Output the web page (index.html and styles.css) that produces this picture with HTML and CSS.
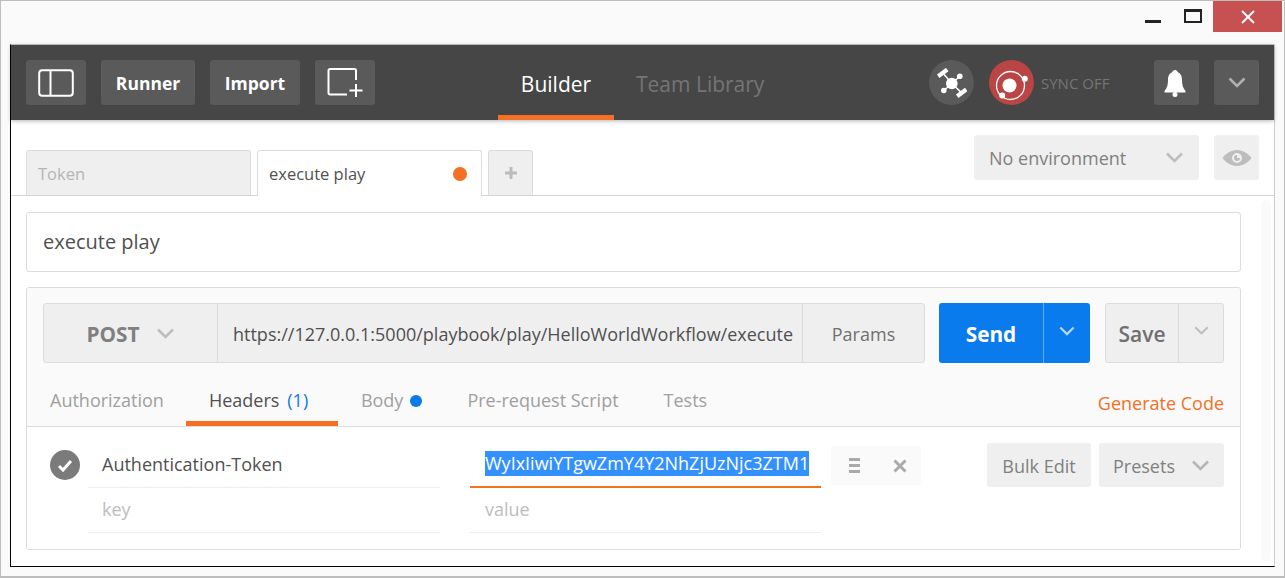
FILE: index.html
```html
<!DOCTYPE html>
<html lang="en">
<head>
  <meta charset="UTF-8">
  <title>Postman</title>
  <link rel="stylesheet" href="styles.css">
</head>
<body>
  <div class="window">
    <div class="titlebar">
      <span class="win-min"></span>
      <span class="win-max"></span>
      <span class="win-close">
        <svg width="16" height="14" viewBox="0 0 16 14"><path d="M2 1l12 12M14 1L2 13" stroke="#fff" stroke-width="2" fill="none"/></svg>
      </span>
    </div>
    <div class="app">
      <header class="topbar">
        <button class="top-btn icon-btn">
          <svg width="36" height="28" viewBox="0 0 36 28"><rect x="1.2" y="1.2" width="33.6" height="25.6" rx="3" fill="none" stroke="#fff" stroke-width="2"/><path d="M12.500 1v26" stroke="#fff" stroke-width="2"/></svg>
        </button>
        <button class="top-btn runner-btn">Runner</button>
        <button class="top-btn import-btn">Import</button>
        <button class="top-btn icon-btn">
          <svg width="36" height="30" viewBox="0 0 36 30"><path d="M29 12V2.500a1.500 1.500 0 0 0-1.500-1.500H3a1.500 1.500 0 0 0-1.500 1.500V25A1.500 1.500 0 0 0 3 26.500h17" fill="none" stroke="#fff" stroke-width="2"/><path d="M29 16v13M22.500 22.500h13" stroke="#fff" stroke-width="2" fill="none"/></svg>
        </button>
        <nav class="top-tabs">
          <a class="top-tab active">Builder</a>
          <a class="top-tab">Team Library</a>
        </nav>
        <div class="top-right">
          <span class="round-btn grey">
            <svg width="30" height="30" viewBox="0 0 30 30"><g fill="#fff" stroke="#fff"><circle cx="14.800" cy="15.500" r="5.800" stroke="none"/><path d="M14.800 15.500L5.700 4.800M14.800 15.500l8-7.300M14.800 15.500l-8 7M14.800 15.500l9.900 9.400" stroke-width="1.500"/><path d="M1.200 8.200l9-6.700M20.200 28.200l9-6.700" stroke-width="4.200"/><circle cx="22.800" cy="8.200" r="2.800" stroke="none"/><circle cx="6.800" cy="22.500" r="2.800" stroke="none"/></g></svg>
          </span>
          <span class="round-btn red">
            <svg width="40" height="40" viewBox="0 0 40 40"><circle cx="18.500" cy="22.500" r="14" fill="none" stroke="#fff" stroke-width="1.300"/><circle cx="17.500" cy="22.500" r="7" fill="#fff"/><circle cx="32.800" cy="15.800" r="3" fill="#fff"/><circle cx="10.200" cy="32.500" r="3" fill="#fff"/></svg>
          </span>
          <span class="sync-label">SYNC OFF</span>
          <button class="top-btn square bell">
            <svg width="22" height="28" viewBox="0 0 22 28"><path d="M11 1c1.500 0 2.500 1 2.800 2.300C17 4.500 18 7.500 18 11c0 5 1 8 3.500 11v1.500H.5V22C3 19 4 16 4 11c0-3.500 1-6.500 4.200-7.700C8.500 2 9.500 1 11 1z" fill="#fff"/><circle cx="11" cy="25.500" r="2.500" fill="#fff"/></svg>
          </button>
          <button class="top-btn square">
            <svg class="chev" width="18" height="11" viewBox="0 0 18 11"><path d="M1.500 1.500L9 9l7.500-7.500" fill="none" stroke="#b0b0b0" stroke-width="2.500"/></svg>
          </button>
        </div>
      </header>

      <div class="tabbar">
        <div class="tab inactive">Token</div>
        <div class="tab current">execute play<span class="dot-orange"></span></div>
        <div class="tab add">
          <svg width="12" height="12" viewBox="0 0 12 12"><path d="M6 0v12M0 6h12" stroke="#bbb" stroke-width="3"/></svg>
        </div>
        <div class="env-select">No environment
          <svg width="19" height="11" viewBox="0 0 18 11"><path d="M1.500 1.500L9 9l7.500-7.500" fill="none" stroke="#bdbdbd" stroke-width="2.500"/></svg>
        </div>
        <div class="env-eye">
          <svg width="30" height="18" viewBox="0 0 30 18"><path fill-rule="evenodd" d="M15 1c6.500 0 11.500 4 14.500 8-3 4-8 8-14.500 8S3.500 13 .5 9C3.500 5 8.500 1 15 1zm0 3a5 5 0 1 0 0 10 5 5 0 0 0 0-10z" fill="#bdbdbd"/><path d="M15 6a3 3 0 1 0 3 3h-3z" fill="#bdbdbd"/></svg>
        </div>
      </div>

      <main class="content">
        <div class="request-name">execute play</div>
        <section class="panel">
          <div class="panel-top">
            <div class="url-row">
              <div class="url-group">
                <div class="method"><span class="method-name">POST</span>
                  <svg width="19" height="11" viewBox="0 0 18 11"><path d="M1.500 1.500L9 9l7.500-7.500" fill="none" stroke="#bdbdbd" stroke-width="2.500"/></svg>
                </div>
                <div class="url">https://127.0.0.1:5000/playbook/play/HelloWorldWorkflow/execute</div>
                <div class="params">Params</div>
              </div>
              <div class="send">
                <span class="send-main">Send</span>
                <span class="send-more">
                  <svg width="16" height="10" viewBox="0 0 18 11"><path d="M1.500 1.500L9 9l7.500-7.500" fill="none" stroke="#b5d6f5" stroke-width="2.500"/></svg>
                </span>
              </div>
              <div class="save">
                <span class="save-main">Save</span>
                <span class="save-more">
                  <svg width="15" height="9" viewBox="0 0 18 11"><path d="M1.500 1.500L9 9l7.500-7.500" fill="none" stroke="#bdbdbd" stroke-width="2.500"/></svg>
                </span>
              </div>
            </div>
            <div class="req-tabs">
              <a class="req-tab tab-auth">Authorization</a>
              <a class="req-tab tab-headers">Headers<span class="count">(1)</span></a>
              <a class="req-tab tab-body">Body<span class="dot-blue"></span></a>
              <a class="req-tab tab-pre">Pre-request Script</a>
              <a class="req-tab tab-tests">Tests</a>
              <a class="gen-code">Generate Code</a>
            </div>
          </div>
          <div class="panel-body">
            <div class="check">
              <svg width="16" height="13" viewBox="0 0 16 13"><path d="M2 7l4 4 8-9" fill="none" stroke="#fff" stroke-width="3"/></svg>
            </div>
            <div class="kv-grid">
              <div class="cell key">Authentication-Token</div>
              <div class="cell value focused"><span class="selected">WyIxIiwiYTgwZmY4Y2NhZjUzNjc3ZTM1</span></div>
              <div class="cell key placeholder">key</div>
              <div class="cell value placeholder">value</div>
            </div>
            <div class="row-actions">
              <svg width="11" height="15" viewBox="0 0 11 15"><path d="M0 1.500h11M0 7.500h11M0 13.500h11" stroke="#aaa" stroke-width="3"/></svg>
              <svg width="14" height="14" viewBox="0 0 14 14"><path d="M1.500 1.500l11 11M12.500 1.500l-11 11" stroke="#aaa" stroke-width="3"/></svg>
            </div>
            <div class="bulk">Bulk Edit</div>
            <div class="presets">Presets
              <svg width="19" height="11" viewBox="0 0 18 11"><path d="M1.500 1.500L9 9l7.500-7.500" fill="none" stroke="#b5b5b5" stroke-width="2.500"/></svg>
            </div>
          </div>
        </section>
        <div class="scroll-track"></div>
      </main>
    </div>
  </div>
</body>
</html>
```

FILE: styles.css
```css
* {
  box-sizing: border-box;
}
html, body {
  margin: 0;
  height: 100%;
  overflow: hidden;
}
body {
  font-family: "Open Sans", sans-serif;
  color: #505050;
  background: #fff;
}
button {
  font-family: inherit;
  border: none;
  padding: 0;
}
.window {
  width: 1285px;
  height: 578px;
  border: 1px solid #bdbdbd;
  border-bottom-width: 2px;
  background: #fafafa;
  display: flex;
  flex-direction: column;
  padding: 0 9px 9px;
}
.titlebar {
  height: 43px;
  flex: none;
  display: flex;
  justify-content: flex-end;
  align-items: flex-start;
  margin-right: -7px;
}
.win-min {
  width: 16px;
  height: 3px;
  background: #222;
  margin-top: 19px;
  margin-right: 23px;
}
.win-max {
  width: 18px;
  height: 14px;
  border: 2px solid #222;
  border-top-width: 3px;
  margin-top: 8px;
  margin-right: 11px;
}
.win-close {
  width: 69px;
  height: 31px;
  background: #c75050;
  display: flex;
  align-items: center;
  justify-content: center;
}
.app {
  flex: 1;
  display: flex;
  flex-direction: column;
  background: #fff;
  border-top: 1px solid #c8c8c8;
  border-left: 1px solid #000;
  border-bottom: 1px solid #000;
  border-right: 1px solid #ccc;
  min-height: 0;
}

/* top bar */
.topbar {
  height: 75px;
  flex: none;
  background: #464646;
  box-shadow: 0 1px 4px rgba(0, 0, 0, 0.3);
  display: flex;
  align-items: center;
  padding: 0 15px;
  gap: 15px;
  position: relative;
}
.top-btn {
  height: 45px;
  background: #5a5a5a;
  border-radius: 3px;
  color: #fff;
  font-size: 17.5px;
  font-weight: 700;
  display: flex;
  align-items: center;
  justify-content: center;
}
.icon-btn {
  width: 60px;
}
.runner-btn {
  width: 94px;
}
.import-btn {
  width: 90px;
}
.top-tabs {
  display: flex;
  height: 100%;
  margin-left: 108px;
  gap: 22px;
}
.top-tab {
  font-size: 21px;
  color: #757575;
  display: flex;
  align-items: center;
  height: 100%;
  padding-top: 3px;
}
.top-tab.active {
  color: #fff;
  width: 116px;
  justify-content: center;
  border-bottom: 5px solid #f47023;
  padding-top: 8px;
}
.top-right {
  margin-left: auto;
  display: flex;
  align-items: center;
}
.round-btn {
  width: 45px;
  height: 45px;
  border-radius: 50%;
  display: flex;
  align-items: center;
  justify-content: center;
}
.round-btn.grey {
  background: #5a5a5a;
  margin-right: 15px;
}
.round-btn.red {
  background: #bb4444;
}
.sync-label {
  font-size: 15px;
  color: #757575;
  margin-left: 7px;
  width: 113px;
}
.square {
  width: 45px;
}
.bell {
  margin-right: 15px;
}
.bell svg {
  margin-right: 3px;
}

/* tab strip */
.tabbar {
  height: 76px;
  flex: none;
  display: flex;
  align-items: flex-end;
  padding-left: 15px;
  border-bottom: 1px solid #d5d5d5;
  position: relative;
}
.tab {
  height: 45px;
  border: 1px solid #dcdcdc;
  border-bottom: none;
  border-radius: 3px 3px 0 0;
  font-size: 16.5px;
  display: flex;
  align-items: center;
  padding: 1px 11px 0;
  margin-right: 6px;
}
.tab.inactive {
  width: 225px;
  background: #efefef;
  color: #b5b5b5;
}
.tab.current {
  width: 225px;
  background: #fff;
  color: #505050;
  height: 46px;
  margin-bottom: -1px;
  padding-top: 0;
  justify-content: space-between;
}
.tab.add {
  width: 45px;
  background: #efefef;
  justify-content: center;
  padding: 0;
}
.dot-orange {
  width: 14px;
  height: 14px;
  border-radius: 50%;
  background: #f47023;
  margin-right: 3px;
}
.env-select {
  width: 225px;
  height: 45px;
  background: #efefef;
  border-radius: 3px;
  font-size: 18px;
  color: #808080;
  display: flex;
  align-items: center;
  justify-content: space-between;
  padding: 0 15px;
  margin: 0 15px 15px auto;
}
.env-eye {
  width: 45px;
  height: 45px;
  background: #efefef;
  border-radius: 3px;
  display: flex;
  align-items: center;
  justify-content: center;
  margin-right: 15px;
  margin-bottom: 15px;
}

/* main */
.content {
  flex: 1;
  padding: 16px 33px 0 15px;
  position: relative;
  min-height: 0;
}
.request-name {
  height: 60px;
  border: 1px solid #dcdcdc;
  border-radius: 3px;
  font-size: 20px;
  font-weight: 500;
  display: flex;
  align-items: center;
  padding: 0 16px 2px;
  margin-bottom: 15px;
}
.panel {
  height: 263px;
  border: 1px solid #dcdcdc;
  border-radius: 3px;
  display: flex;
  flex-direction: column;
  overflow: hidden;
}
.panel-top {
  height: 139px;
  flex: none;
  background: #fafafa;
  border-bottom: 1px solid #dcdcdc;
  padding: 15px 16px 0 16px;
  display: flex;
  flex-direction: column;
}
.url-row {
  display: flex;
  height: 60px;
  flex: none;
}
.url-group {
  width: 882px;
  display: flex;
  border: 1px solid #dcdcdc;
  border-radius: 3px;
  background: #efefef;
}
.method {
  width: 174px;
  flex: none;
  font-size: 20.800px;
  font-weight: 700;
  color: #808080;
  display: flex;
  align-items: center;
  justify-content: center;
  gap: 16px;
  border-right: 1px solid #dcdcdc;
}
.method-name {
  padding-top: 2px;
}
.url {
  flex: 1;
  font-size: 18px;
  display: flex;
  align-items: center;
  padding: 2px 0 0 15px;
  white-space: nowrap;
  overflow: hidden;
}
.params {
  width: 122px;
  flex: none;
  font-size: 18px;
  color: #707070;
  border-left: 1px solid #dcdcdc;
  padding-top: 2px;
  display: flex;
  align-items: center;
  justify-content: center;
}
.send {
  width: 151px;
  margin-left: 14px;
  display: flex;
  background: #097bed;
  border-radius: 3px;
  color: #fff;
}
.send-main {
  width: 105px;
  font-size: 20.800px;
  font-weight: 700;
  padding-top: 2px;
  display: flex;
  align-items: center;
  justify-content: center;
  border-right: 1px solid #6aaef2;
}
.send-more {
  flex: 1;
  display: flex;
  align-items: center;
  justify-content: center;
  padding-bottom: 4px;
}
.save {
  width: 119px;
  margin-left: 15px;
  display: flex;
  background: #efefef;
  border: 1px solid #dcdcdc;
  border-radius: 3px;
}
.save-main {
  width: 73px;
  font-size: 21px;
  font-weight: 600;
  color: #707070;
  padding-top: 2px;
  display: flex;
  align-items: center;
  justify-content: center;
  border-right: 1px solid #dcdcdc;
}
.save-more {
  flex: 1;
  display: flex;
  align-items: center;
  justify-content: center;
  padding-bottom: 6px;
}
.req-tabs {
  flex: 1;
  display: flex;
  align-items: stretch;
  margin-top: 23px;
  font-size: 18px;
}
.req-tab {
  color: #a0a0a0;
  display: flex;
  align-items: center;
  padding-bottom: 12px;
  white-space: pre;
}
.tab-auth {
  margin-left: 7px;
}
.tab-headers {
  margin-left: 22px;
  width: 152px;
  padding-left: 23px;
  color: #505050;
  border-bottom: 5px solid #f47023;
  padding-bottom: 7px;
}
.count {
  color: #097bed;
  margin-left: 8px;
}
.tab-body {
  margin-left: 23px;
}
.dot-blue {
  width: 12px;
  height: 12px;
  border-radius: 50%;
  background: #097bed;
  margin-left: 7px;
  margin-top: 1px;
}
.tab-pre {
  margin-left: 45px;
}
.tab-tests {
  margin-left: 45px;
}
.gen-code {
  margin-left: auto;
  color: #f47023;
  display: flex;
  align-items: center;
  padding-bottom: 7px;
}
.panel-body {
  flex: 1;
  background: #fff;
  position: relative;
  display: flex;
  align-items: flex-start;
  padding: 16px 16px 0 23px;
}
.check {
  width: 30px;
  height: 30px;
  border-radius: 50%;
  background: #7b7b7b;
  flex: none;
  margin-top: 7px;
  display: flex;
  align-items: center;
  justify-content: center;
}
.kv-grid {
  width: 733px;
  margin-left: 8px;
  flex: none;
  display: grid;
  grid-template-columns: 352px 351px;
  column-gap: 30px;
  grid-auto-rows: 45px;
}
.cell {
  font-size: 18px;
  display: flex;
  align-items: center;
  padding: 0 0 2px 14px;
  border-bottom: 1px solid #eee;
}
.cell.value {
  padding-left: 15px;
}
.cell.focused {
  border-bottom: 2px solid #f47023;
  color: #fff;
}
.placeholder {
  color: #bdbdbd;
}
.selected {
  background: #3390ff;
  color: #fff;
  line-height: 25px;
  white-space: nowrap;
}
.row-actions {
  width: 90px;
  height: 39px;
  background: #fafafa;
  border-radius: 3px;
  flex: none;
  margin-left: 10px;
  margin-top: 3px;
  display: flex;
  align-items: center;
  justify-content: space-between;
  padding: 0 14px 0 18px;
}
.bulk, .presets {
  height: 44px;
  background: #efefef;
  border-radius: 3px;
  font-size: 18px;
  color: #808080;
  display: flex;
  align-items: center;
  flex: none;
  padding-top: 1px;
}
.bulk {
  width: 104px;
  justify-content: center;
  margin-left: 66px;
}
.presets {
  width: 125px;
  margin-left: 8px;
  padding-left: 14px;
  padding-right: 14px;
  justify-content: space-between;
}
.scroll-track {
  position: absolute;
  right: 3px;
  top: 4px;
  bottom: 5px;
  width: 10px;
  background: #fafafa;
  border-radius: 5px;
}
```
